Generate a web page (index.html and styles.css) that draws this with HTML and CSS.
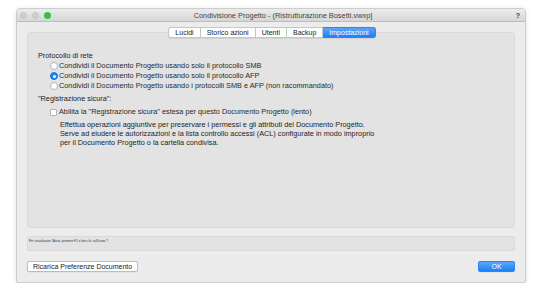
FILE: index.html
```html
<!DOCTYPE html>
<html lang="it">
<head>
<meta charset="utf-8">
<title>Condivisione Progetto</title>
<link rel="stylesheet" href="styles.css">
</head>
<body>
<div class="window">
  <div class="titlebar">
    <div class="lights">
      <span class="light gray"></span>
      <span class="light gray"></span>
      <span class="light green"></span>
    </div>
    <div class="title">Condivisione Progetto - (Ristrutturazione Bosetti.vwxp]</div>
    <div class="help">?</div>
  </div>
  <div class="body">
    <div class="tabs">
      <div class="tab">Lucidi</div>
      <div class="tab">Storico azioni</div>
      <div class="tab">Utenti</div>
      <div class="tab">Backup</div>
      <div class="tab active">Impostazioni</div>
    </div>
    <div class="panel">
      <div class="heading">Protocollo di rete</div>
      <div class="options">
        <div class="opt"><span class="radio"></span><span>Condividi il Documento Progetto usando solo il protocollo SMB</span></div>
        <div class="opt"><span class="radio on"></span><span>Condividi il Documento Progetto usando solo il protocollo AFP</span></div>
        <div class="opt"><span class="radio"></span><span>Condividi il Documento Progetto usando i protocolli SMB e AFP (non racommandato)</span></div>
      </div>
      <div class="heading sec">"Registrazione sicura":</div>
      <div class="options">
        <div class="opt chk"><span class="check"></span><span>Abilita la "Registrazione sicura" estesa per questo Documento Progetto (lento)</span></div>
        <div class="desc">
          <div>Effettua operazioni aggiuntive per preservare i permessi e gli attributi del Documento Progetto.</div>
          <div>Serve ad eludere le autorizzazioni e la lista controllo accessi (ACL) configurate in modo improprio</div>
          <div>per il Documento Progetto o la cartella condivisa.</div>
        </div>
      </div>
    </div>
    <div class="helpbar">Per visualizzare l'Aiuto, premere F1 o fare clic sull'icona ?</div>
    <div class="buttons">
      <div class="btn">Ricarica Preferenze Documento</div>
      <div class="btn primary">OK</div>
    </div>
  </div>
</div>
</body>
</html>
```

FILE: styles.css
```css
html, body {
  margin: 0;
  padding: 0;
  background: #ffffff;
}
body {
  font-family: "Liberation Sans", Arial, sans-serif;
  font-size: 7.3px;
  color: #2a2a2a;
  padding: 8px 0 0 16px;
}
.window {
  width: 508px;
  height: 273px;
  border: 1px solid #cdcdcd;
  border-radius: 4px 4px 2px 2px;
  background: #ececec;
  box-shadow: 0 1px 5px rgba(0,0,0,0.12);
  display: flex;
  flex-direction: column;
  overflow: hidden;
}
.titlebar {
  height: 12px;
  flex: none;
  background: linear-gradient(#ececec, #d6d6d6);
  border-bottom: 1px solid #bdbdbd;
  display: flex;
  align-items: center;
}
.lights {
  display: flex;
  gap: 5px;
  padding-left: 3px;
}
.light {
  width: 7px;
  height: 7px;
  border-radius: 50%;
}
.light.gray {
  background: #d0d0d0;
  border: 0.5px solid #c4c4c4;
  box-sizing: border-box;
}
.light.green {
  background: #2fc53c;
}
.title {
  flex: 1;
  text-align: center;
  color: #444;
  font-size: 7.4px;
  padding-left: 4px;
}
.help {
  width: 14px;
  font-weight: bold;
  color: #333;
  font-size: 7px;
  text-align: center;
}
.body {
  flex: 1;
  display: flex;
  flex-direction: column;
  padding: 5px 10px 10px 10px;
}
.tabs {
  display: flex;
  justify-content: center;
  position: relative;
  z-index: 1;
  height: 11px;
  padding-left: 2px;
  font-size: 7px;
}
.tab {
  background: #ffffff;
  border: 1px solid #c6c6c6;
  border-left: none;
  line-height: 9px;
  padding: 0 6px;
  color: #222;
  box-shadow: 0 0.5px 1px rgba(0,0,0,0.08);
}
.tab:first-child {
  border-left: 1px solid #c6c6c6;
  border-radius: 3px 0 0 3px;
}
.tab.active {
  background: linear-gradient(#5aa5fc, #1d80f6);
  border-color: #2b86f2;
  color: #ffffff;
  border-radius: 0 3px 3px 0;
}
.panel {
  flex: 1;
  margin-top: -6px;
  background: #e3e3e3;
  border: 1px solid #d9d9d9;
  border-radius: 4px;
  padding: 18px 10px 0 10px;
}
.heading {
  line-height: 10px;
  color: #222;
}
.heading.sec {
  margin-top: 3px;
}
.options {
  padding-left: 13px;
}
.opt {
  display: flex;
  align-items: center;
  line-height: 10px;
  gap: 1px;
  margin-left: -1px;
}
.radio {
  width: 8px;
  height: 8px;
  box-sizing: border-box;
  border-radius: 50%;
  background: #ffffff;
  border: 0.5px solid #b5b5b5;
  flex: none;
}
.radio.on {
  background: #1e82f5;
  border-color: #1a74e0;
  position: relative;
}
.radio.on::after {
  content: "";
  position: absolute;
  left: 2.25px;
  top: 2.25px;
  width: 3px;
  height: 3px;
  border-radius: 50%;
  background: #ffffff;
}
.opt.chk {
  margin-top: 3px;
  gap: 2px;
}
.check {
  width: 7px;
  height: 7px;
  box-sizing: border-box;
  background: #ffffff;
  border: 0.5px solid #b5b5b5;
  border-radius: 1px;
  flex: none;
}
.desc {
  margin-top: 3px;
  padding-left: 9px;
  line-height: 9px;
  color: #1e1e1e;
}
.helpbar {
  flex: none;
  margin-top: 8px;
  height: 13px;
  background: #e3e3e3;
  border: 1px solid #d9d9d9;
  border-radius: 2px;
  font-size: 3.1px;
  line-height: 9px;
  padding-left: 1px;
  color: #333;
}
.buttons {
  flex: none;
  margin-top: 10px;
  display: flex;
  justify-content: space-between;
}
.btn {
  height: 11px;
  box-sizing: border-box;
  line-height: 9px;
  background: #ffffff;
  border: 1px solid #bcbcbc;
  border-radius: 2px;
  padding: 0 5px;
  color: #222;
  font-size: 7px;
  box-shadow: 0 0.5px 0.5px rgba(0,0,0,0.08);
}
.btn.primary {
  width: 37px;
  text-align: center;
  background: linear-gradient(#5aa5fc, #1d80f6);
  border-color: #2b86f2;
  color: #ffffff;
}
```
